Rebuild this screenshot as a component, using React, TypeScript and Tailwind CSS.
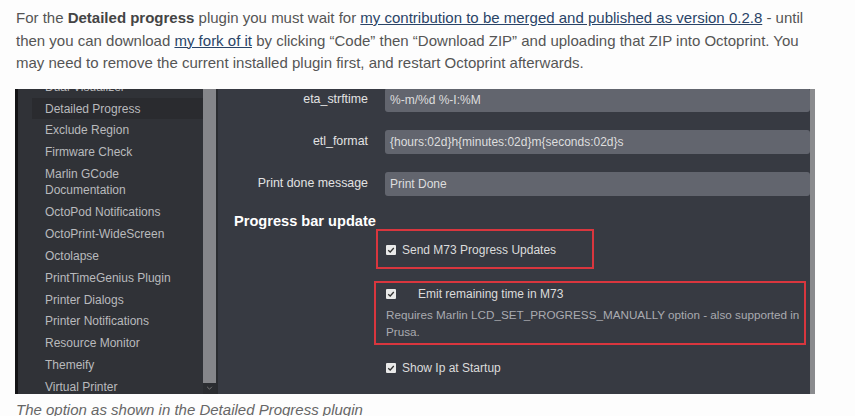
import React from "react";

const plugins = [
  "Dual Visualizer",
  "Detailed Progress",
  "Exclude Region",
  "Firmware Check",
  "Marlin GCode Documentation",
  "OctoPod Notifications",
  "OctoPrint-WideScreen",
  "Octolapse",
  "PrintTimeGenius Plugin",
  "Printer Dialogs",
  "Printer Notifications",
  "Resource Monitor",
  "Themeify",
  "Virtual Printer",
];

const fields = [
  { label: "eta_strftime", value: "%-m/%d %-I:%M" },
  { label: "etl_format", value: "{hours:02d}h{minutes:02d}m{seconds:02d}s" },
  { label: "Print done message", value: "Print Done" },
];

function Check() {
  return (
    <span className="flex h-[10px] w-[10px] shrink-0 items-center justify-center rounded-[1px] bg-[#e9e9e9]">
      <svg viewBox="0 0 10 10" className="h-[8px] w-[8px]">
        <path d="M1.5 5.2 L4 7.5 L8.5 2.5" fill="none" stroke="#333" strokeWidth="1.6" />
      </svg>
    </span>
  );
}

export default function App() {
  return (
    <div className="h-[416px] w-[855px] overflow-hidden bg-[#fdfdfd] font-['Liberation_Sans',Arial,sans-serif]">
      <p className="whitespace-nowrap pl-[16px] pt-[7px] text-[15px] leading-[22.5px] text-[#555]">
        For the <b className="text-[#444]">Detailed progress</b> plugin you must wait for{" "}
        <a className="text-[#2a4467] underline">my contribution to be merged and published as version 0.2.8</a> - until
        <br />
        then you can download <a className="text-[#2a4467] underline">my fork of it</a> by clicking “Code” then
        “Download ZIP” and uploading that ZIP into Octoprint. You
        <br />
        may need to remove the current installed plugin first, and restart Octoprint afterwards.
      </p>

      <div className="ml-[15px] mt-[14px] flex h-[305px] w-[800px] overflow-hidden bg-[#373a42]">
        <div className="w-[3px] bg-[#141416]" />
        <div className="w-[185px] bg-[#303237] pl-[14px] text-[12px] leading-[16px] text-[#b9babd]">
          <div className="-mt-[12.8px]">
            {plugins.map((p) => (
              <div
                key={p}
                className={`py-[2.95px] pl-[13px] pr-[6px] ${p === "Detailed Progress" ? "bg-[#2a2b2f]" : ""}`}
              >
                {p}
              </div>
            ))}
          </div>
        </div>
        <div className="flex w-[13px] flex-col bg-[#85868a]">
          <div className="flex-1" />
          <div className="flex h-[11px] items-center justify-center bg-[#2b2d31]">
            <svg viewBox="0 0 8 5" className="h-[4px] w-[7px]">
              <path d="M1 1 L4 4 L7 1" fill="none" stroke="#777" strokeWidth="1.2" />
            </svg>
          </div>
        </div>
        <div className="w-[2px] bg-[#2a2c30]" />

        <div className="flex-1 text-[12px] text-[#dcdcdc]">
          <div className="-mt-[1px] flex flex-col gap-[18px]">
            {fields.map((f) => (
              <div key={f.label} className="flex items-center">
                <div className="w-[150px] text-right text-[12.4px] text-[#e2e2e2]">{f.label}</div>
                <div className="ml-[17px] flex h-[24px] flex-1 items-center rounded-[3px] bg-[#62656e] pl-[5px] text-[#dedede]">
                  {f.value}
                </div>
              </div>
            ))}
          </div>

          <div className="ml-[16px] mt-[15px] text-[14.6px] font-bold leading-[20px] text-white">Progress bar update</div>

          <div className="ml-[158px] mt-[-2px] flex h-[40px] w-[218px] items-center gap-[6px] border-2 border-[#d9363e] pl-[8px] pt-[3px]">
            <Check />
            <span>Send M73 Progress Updates</span>
          </div>

          <div className="ml-[156px] mt-[12px] h-[64px] w-[432px] border-2 border-[#d9363e] pl-[10px] pt-[1px]">
            <div className="flex h-[20px] items-center gap-[22px]">
              <Check />
              <span>Emit remaining time in M73</span>
            </div>
            <div className="mt-[2px] whitespace-nowrap text-[11.7px] leading-[17px] text-[#a9aab0]">
              Requires Marlin LCD_SET_PROGRESS_MANUALLY option - also supported in
              <br />
              Prusa.
            </div>
          </div>

          <div className="ml-[168px] mt-[14px] flex items-center gap-[6px]">
            <Check />
            <span>Show Ip at Startup</span>
          </div>
        </div>
        <div className="w-[5px] bg-[#8a8b8e]" />
      </div>

      <p className="pl-[16px] pt-[6px] text-[15px] italic leading-[20px] text-[#666]">
        The option as shown in the Detailed Progress plugin
      </p>
    </div>
  );
}
